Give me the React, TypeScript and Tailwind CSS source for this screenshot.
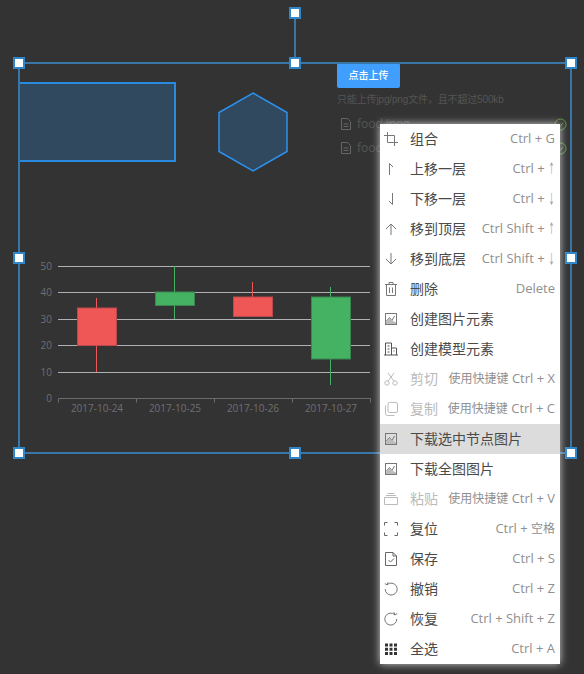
import React from "react";

const S = ({ children, c = "#777" }: { children: React.ReactNode; c?: string }) => (
  <svg width="16" height="16" viewBox="0 0 16 16" fill="none" stroke={c} strokeWidth="1">
    {children}
  </svg>
);

const picture = (
  <>
    <rect x="2.5" y="2.5" width="11" height="11" />
    <path d="M3 10.5l3.5-4 2.5 3L11.5 5" />
    <path d="M3 13h10v-1.5L9 9.5 6.5 7 3 11z" fill="#bbb" stroke="none" />
  </>
);

type Row = { label: string; key: string; icon: React.ReactNode; disabled?: boolean; active?: boolean };

const rows: Row[] = [
  { label: "组合", key: "Ctrl + G", icon: <S><path d="M4.5 1v10.5H15M1 4.5h10.5V15" /></S> },
  { label: "上移一层", key: "Ctrl + ↑", icon: <S><path d="M6.5 14V2.5L10 6" /></S> },
  { label: "下移一层", key: "Ctrl + ↓", icon: <S><path d="M9.5 2v11.5L6 10" /></S> },
  { label: "移到顶层", key: "Ctrl Shift + ↑", icon: <S><path d="M8 14V3M3 8l5-5 5 5" /></S> },
  { label: "移到底层", key: "Ctrl Shift + ↓", icon: <S><path d="M8 2v11M3 8l5 5 5-5" /></S> },
  { label: "删除", key: "Delete", icon: <S><path d="M2 3.5h12M6 3.5V1.5h4v2M3.5 3.5v11h9v-11M6.5 6.5v5.5M9.5 6.5v5.5" /></S> },
  { label: "创建图片元素", key: "", icon: <S>{picture}</S> },
  { label: "创建模型元素", key: "", icon: <S c="#555"><path d="M2.5 14V2h6v12M8.5 7h5v7M1 14h14M4.5 5h2M4.5 8h2M4.5 11h2M10.5 10h1" /></S> },
  { label: "剪切", key: "使用快捷键 Ctrl + X", disabled: true, icon: <S c="#bbb"><circle cx="4" cy="12" r="2.2" /><circle cx="12" cy="12" r="2.2" /><path d="M5.2 10L11 2M10.8 10L5 2" /></S> },
  { label: "复制", key: "使用快捷键 Ctrl + C", disabled: true, icon: <S c="#bbb"><rect x="5" y="1.5" width="9.5" height="10" rx="1.5" /><path d="M2.5 4.5v8a2 2 0 002 2h7" /></S> },
  { label: "下载选中节点图片", key: "", active: true, icon: <S>{picture}</S> },
  { label: "下载全图图片", key: "", icon: <S>{picture}</S> },
  { label: "粘贴", key: "使用快捷键 Ctrl + V", disabled: true, icon: <S c="#bbb"><path d="M1.5 6.5h13v7h-13zM3 4.5h10M4.5 2.5h7" /></S> },
  { label: "复位", key: "Ctrl + 空格", icon: <S c="#666"><path d="M1.5 4.5v-3H4.5M11.5 1.5h3v3M14.5 11.5v3h-3M4.5 14.5h-3v-3" /></S> },
  { label: "保存", key: "Ctrl + S", icon: <S c="#666"><path d="M2.5 1.5h7.5l3.5 3.5v9.5h-11zM10 1.5V5h3.5M5.5 9l2 2 3.5-3.5" /></S> },
  { label: "撤销", key: "Ctrl + Z", icon: <S><path d="M4 3.8A6 6 0 112.2 8M1.8 2.5L4.2 4l.8-2.8" /></S> },
  { label: "恢复", key: "Ctrl + Shift + Z", icon: <S><path d="M12 3.8A6 6 0 1013.8 8M14.2 2.5L11.8 4 11 1.2" /></S> },
  { label: "全选", key: "Ctrl + A", icon: <svg width="16" height="16" viewBox="0 0 16 16" fill="#333"><path d="M2 2.5h3v3H2zM6.5 2.5h3v3h-3zM11 2.5h3v3h-3zM2 6.7h3v3H2zM6.5 6.7h3v3h-3zM11 6.7h3v3h-3zM2 11h3v3H2zM6.5 11h3v3h-3zM11 11h3v3h-3z" /></svg> },
];

const Shortcut = ({ text }: { text: string }) => (
  <span className="ml-auto flex items-center text-[13px] whitespace-nowrap text-[#8f8f8f]">
    {text.split(/([\u4e00-\u9fff]+|[↑↓])/).map((part, i) =>
      /[\u4e00-\u9fff]/.test(part) ? (
        <span key={i} className="text-[12px]">{part}</span>
      ) : /[↑↓]/.test(part) ? (
        <span key={i} className="w-[7px] flex justify-center">
          <span className="inline-block scale-x-50">{part}</span>
        </span>
      ) : (
        <span key={i} className="whitespace-pre">{part}</span>
      )
    )}
  </span>
);

const candles = [
  { x: 77.5, y: 308, h: 37.5, wx: 96.5, w1: 298, w2: 372, red: true },
  { x: 155.5, y: 292, h: 13.5, wx: 174.5, w1: 266, w2: 319, red: false },
  { x: 233.5, y: 297, h: 19.5, wx: 252.5, w1: 282, w2: 297, red: true },
  { x: 311.5, y: 297, h: 62, wx: 330.5, w1: 287, w2: 385, red: false },
];

const Handle = ({ x, y }: { x: number; y: number }) => (
  <div
    className="absolute w-3 h-3 -ml-1.5 -mt-1.5 bg-white border-2 border-[#2f86c9]"
    style={{ left: x, top: y }}
  />
);

const FileRow = () => (
  <div className="h-[24px] flex items-center pl-[4px] pr-[2px]">
    <svg width="10" height="12" viewBox="0 0 10 12" fill="none" stroke="#666">
      <path d="M.5.5h6l3 3v8h-9zM2.5 6h5M2.5 8.5h5" />
    </svg>
    <span className="ml-[6px] text-[12px] leading-[16px] text-[#555]">food.jpeg</span>
    <svg className="ml-auto" width="13" height="13" viewBox="0 0 13 13" fill="none" stroke="#5f9a43">
      <circle cx="6.5" cy="6.5" r="5.5" />
      <path d="M4 6.5l2 2 3-3.5" />
    </svg>
  </div>
);

export default function App() {
  return (
    <div
      className="relative w-[584px] h-[674px] bg-[#333333] overflow-hidden"
      style={{ fontFamily: '"Open Sans","Noto Sans CJK SC",sans-serif' }}
    >
      {/* shapes */}
      <div className="absolute left-[18px] top-[82px] w-[158px] h-[80px] border-2 border-[#2a8ae0] bg-[#31495f]" />
      <svg className="absolute left-0 top-0" width="584" height="674" fill="none">
        <polygon points="253,93 287,112.5 287,151.5 253,171 219,151.5 219,112.5" fill="#31495f" stroke="#2b91ec" strokeWidth="1.5" />
        {[266.5, 292.5, 319.5, 345.5, 372.5].map((y) => (
          <line key={y} x1="58" x2="370" y1={y} y2={y} stroke="#b0b0b4" strokeWidth="1" />
        ))}
        <path d="M58.5 402.5V398.5H370.5V402.5M136.5 398.5V402.5M214.5 398.5V402.5M292.5 398.5V402.5" stroke="#6b6b70" />
        {[50, 40, 30, 20, 10, 0].map((v, i) => (
          <text key={v} x="52" y={269.5 + i * 26.5} textAnchor="end" fontSize="10" fill="#6f6f74">{v}</text>
        ))}
        {["2017-10-24", "2017-10-25", "2017-10-26", "2017-10-27"].map((d, i) => (
          <text key={d} x={97 + i * 78} y="412" textAnchor="middle" fontSize="10" fill="#6f6f74">{d}</text>
        ))}
        {candles.map((c) => (
          <g key={c.x}>
            <line x1={c.wx} x2={c.wx} y1={c.w1} y2={c.w2} stroke={c.red ? "#ef5656" : "#45b263"} />
            <rect x={c.x} y={c.y} width="39" height={c.h} fill={c.red ? "#ef5656" : "#45b263"} stroke={c.red ? "#b94a4c" : "#3a8550"} />
          </g>
        ))}
      </svg>

      {/* upload widget */}
      <div className="absolute left-[337px] top-[63px] w-[232px] flex flex-col items-stretch">
        <div className="w-[63px] h-[25px] rounded-[2px] bg-[#409eff] flex items-center justify-center text-white text-[10px] font-medium">
          点击上传
        </div>
        <div
          className="mt-[5px] mb-[5px] text-[10px] leading-[14px] tracking-[-0.15px] text-[#555]"
          style={{ fontFamily: '"Liberation Sans","Noto Sans CJK SC",sans-serif' }}
        >
          只能上传jpg/png文件，且不超过500kb
        </div>
        <FileRow />
        <FileRow />
      </div>

      {/* selection */}
      <div className="absolute left-[18px] top-[62px] w-[554px] h-[392px] border-2 border-[#3a75a8]" />
      <div className="absolute left-[294px] top-[13px] w-[2px] h-[50px] bg-[#3a75a8]" />
      <Handle x={295} y={13} />
      <Handle x={19} y={63} />
      <Handle x={295} y={63} />
      <Handle x={571} y={63} />
      <Handle x={19} y={258} />
      <Handle x={571} y={258} />
      <Handle x={19} y={453} />
      <Handle x={295} y={453} />
      <Handle x={571} y={453} />

      {/* context menu */}
      <div className="absolute left-[380px] top-[124px] w-[180px] bg-white shadow-[0_0_8px_rgba(255,255,255,0.75)] flex flex-col">
        {rows.map((r) => (
          <div
            key={r.label}
            className={`h-[30px] flex items-center pl-[3px] pr-[5px] ${r.active ? "bg-[#dcdcdc]" : ""}`}
          >
            <span className="w-[16px] h-[16px] flex shrink-0">{r.icon}</span>
            <span className={`ml-[11px] -mt-[2px] text-[14px] whitespace-nowrap ${r.disabled ? "text-[#bbbbbb]" : "text-[#4a4a4a]"}`}>
              {r.label}
            </span>
            {r.key ? <Shortcut text={r.key} /> : null}
          </div>
        ))}
      </div>
    </div>
  );
}
